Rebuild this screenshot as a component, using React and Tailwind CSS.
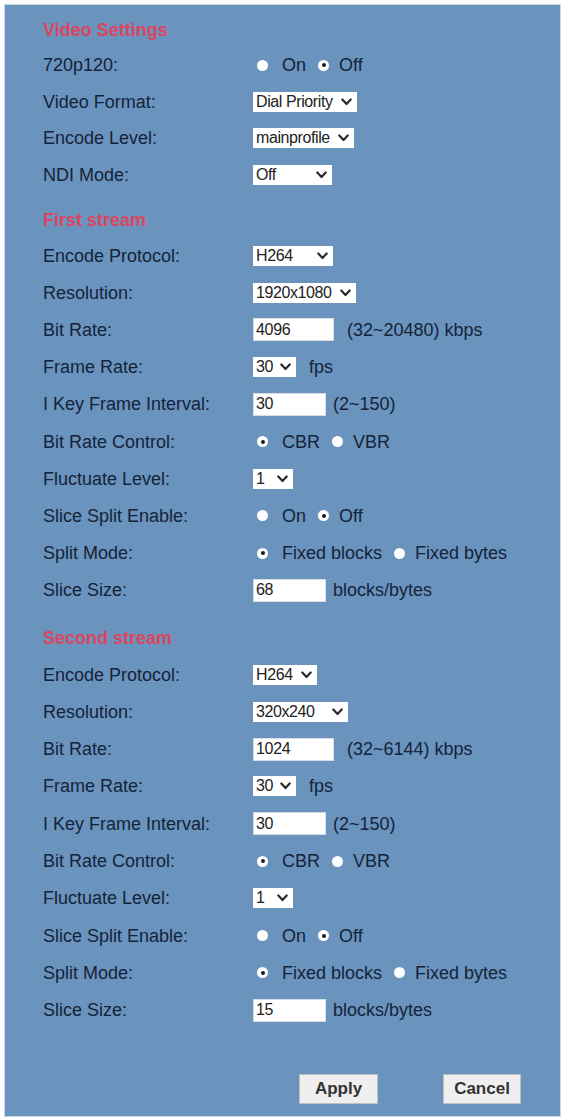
import React from 'react'

const FONT = { fontFamily: '"Liberation Sans", Arial, sans-serif' }

function Chevron() {
  return (
    <svg width="11" height="8" viewBox="0 0 11 8" className="shrink-0">
      <polyline
        points="1.3,1.5 5.5,6 9.7,1.5"
        fill="none"
        stroke="#2a2a2a"
        strokeWidth="2.2"
        strokeLinecap="round"
        strokeLinejoin="round"
      />
    </svg>
  )
}

function Select({ width, value }) {
  return (
    <div
      className="flex h-[20px] items-center justify-between bg-white pl-[3px] pr-[5px] text-[16px] leading-none text-[#222]"
      style={{ width }}
    >
      <span className="tracking-[-0.4px]">{value}</span>
      <Chevron />
    </div>
  )
}

function TextInput({ width, value }) {
  return (
    <div
      className="flex h-[23px] items-center border border-[#d8dde3] bg-white pl-[2px] text-[16px] leading-none tracking-[-0.3px] text-[#222]"
      style={{ width }}
    >
      {value}
    </div>
  )
}

function Dot({ checked }) {
  return (
    <span className="flex h-[11px] w-[11px] shrink-0 items-center justify-center rounded-full bg-white">
      {checked ? <span className="h-[4px] w-[4px] rounded-full bg-[#1a1a1a]" /> : null}
    </span>
  )
}

function Radios({ options, checked }) {
  return (
    <div className="flex items-center pl-[4px]">
      <Dot checked={checked === 0} />
      <span className="ml-[14px]">{options[0]}</span>
      <span className="ml-[12px]">
        <Dot checked={checked === 1} />
      </span>
      <span className="ml-[10px]">{options[1]}</span>
    </div>
  )
}

function Row({ label, height, children }) {
  return (
    <div className="flex items-center" style={{ height }}>
      <div className="w-[210px] shrink-0">{label}</div>
      <div className="flex items-center">{children}</div>
    </div>
  )
}

function Title({ children }) {
  return (
    <h2 className="h-[22px] text-[18px] font-bold leading-[22px] text-[#dc4660]">{children}</h2>
  )
}

function StreamRows({ height, protocolWidth, resolution, resolutionWidth, bitRate, bitRange, sliceSize }) {
  return (
    <>
      <Row label="Encode Protocol:" height={height}>
        <Select width={protocolWidth} value="H264" />
      </Row>
      <Row label="Resolution:" height={height}>
        <Select width={resolutionWidth} value={resolution} />
      </Row>
      <Row label="Bit Rate:" height={height}>
        <TextInput width={81} value={bitRate} />
        <span className="ml-[13px]">{bitRange} kbps</span>
      </Row>
      <Row label="Frame Rate:" height={height}>
        <Select width={43} value="30" />
        <span className="ml-[13px]">fps</span>
      </Row>
      <Row label="I Key Frame Interval:" height={height}>
        <TextInput width={73} value="30" />
        <span className="ml-[7px]">(2~150)</span>
      </Row>
      <Row label="Bit Rate Control:" height={height}>
        <Radios options={['CBR', 'VBR']} checked={0} />
      </Row>
      <Row label="Fluctuate Level:" height={height}>
        <Select width={40} value="1" />
      </Row>
      <Row label="Slice Split Enable:" height={height}>
        <Radios options={['On', 'Off']} checked={1} />
      </Row>
      <Row label="Split Mode:" height={height}>
        <Radios options={['Fixed blocks', 'Fixed bytes']} checked={0} />
      </Row>
      <Row label="Slice Size:" height={height}>
        <TextInput width={73} value={sliceSize} />
        <span className="ml-[7px]">blocks/bytes</span>
      </Row>
    </>
  )
}

export default function App() {
  return (
    <div className="min-h-[1120px] w-[568px] bg-white p-[4px]" style={FONT}>
      <div className="h-[1113px] w-[557px] border border-[#c9d6e3] bg-[#6a93bd] pl-[38px] pt-[14px] text-[18px] leading-none text-[#14233a]">
        <Title>Video Settings</Title>
        <div className="h-[6px]" />
        <Row label="720p120:" height={36.5}>
          <Radios options={['On', 'Off']} checked={1} />
        </Row>
        <Row label="Video Format:" height={36.5}>
          <Select width={104} value="Dial Priority" />
        </Row>
        <Row label="Encode Level:" height={36.5}>
          <Select width={101} value="mainprofile" />
        </Row>
        <Row label="NDI Mode:" height={36.5}>
          <Select width={79} value="Off" />
        </Row>

        <div className="h-[16px]" />
        <Title>First stream</Title>
        <div className="h-[6px]" />
        <StreamRows
          height={37.2}
          protocolWidth={80}
          resolution="1920x1080"
          resolutionWidth={103}
          bitRate="4096"
          bitRange="(32~20480)"
          sliceSize="68"
        />

        <div className="h-[18px]" />
        <Title>Second stream</Title>
        <div className="h-[7px]" />
        <StreamRows
          height={37.3}
          protocolWidth={64}
          resolution="320x240"
          resolutionWidth={95}
          bitRate="1024"
          bitRange="(32~6144)"
          sliceSize="15"
        />

        <div className="mt-[45px] flex">
          <button
            type="button"
            className="ml-[256px] h-[30px] w-[79px] border border-[#b9c0c8] bg-[#efefef] text-[17px] font-bold text-[#333]"
          >
            Apply
          </button>
          <button
            type="button"
            className="ml-[65px] h-[30px] w-[78px] border border-[#b9c0c8] bg-[#efefef] text-[17px] font-bold text-[#333]"
          >
            Cancel
          </button>
        </div>
      </div>
    </div>
  )
}
